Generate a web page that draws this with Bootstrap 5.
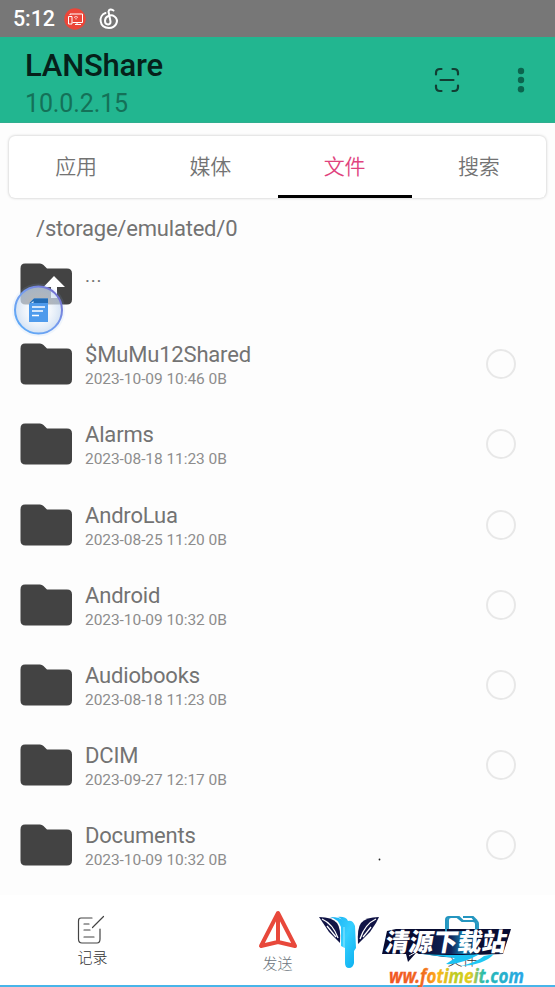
<!DOCTYPE html>
<html lang="zh-CN">
<head>
<meta charset="utf-8">
<meta name="viewport" content="width=device-width, initial-scale=1">
<title>LANShare</title>
<link href="https://cdn.jsdelivr.net/npm/bootstrap@5.3.0/dist/css/bootstrap.min.css" rel="stylesheet">
<style>
body{font-family:Roboto,"Noto Sans CJK SC",sans-serif;background:#fdfdfd;color:#737373;height:987px;overflow:hidden}
.status{height:37px;background:#777;color:#fff;padding-left:13px}
.clock{font-size:21.5px;font-weight:500;line-height:38px;width:50px;letter-spacing:-.1px}
.topbar{height:86px;background:#22b690;padding:0 27px 0 25px;border-bottom:1px solid #2fae8f}
.app-title{font-size:31px;font-weight:500;line-height:36px;color:#06211a;padding-top:11px;margin:0;letter-spacing:-.2px}
.ip{font-size:25px;line-height:30px;color:#147158;padding-top:5px;letter-spacing:-.12px}
.scan{margin-right:54px}
.tabs{height:62px;margin:13px 9px 0;background:#fff;border-radius:6px;box-shadow:0 0 3px rgba(0,0,0,.25)}
.tabs a{font-size:21px;font-weight:350;color:#737373;line-height:63px;height:62px;text-decoration:none}
.tabs a.current{color:#e0437e;box-shadow:inset 0 -3px #000}
.path{font-size:22px;line-height:30px;padding:16px 0 0 36px;height:46px;letter-spacing:-.2px}
.entry{height:80.2px;padding:0 39px 0 20px}
.entry .folder{width:52px;height:42px;margin-right:13px;flex:none}
.entry-text{padding-top:3px}
.entry-name{font-size:22px;line-height:26px;letter-spacing:-.18px}
.entry-info{font-size:15.5px;line-height:20px;color:#8d8d8d;padding-top:1px;letter-spacing:-.06px}
.up-text{font-size:19px;letter-spacing:.7px;padding-bottom:15px}
.pick{width:30px;height:30px;border:2px solid #e8e8e8;border-radius:50%}
.floating{left:9px;top:281px;width:58px;height:58px}
.bottombar{height:92px;top:895px;background:#fff;border-bottom:2px solid #48b5e9}
.nav-cell{flex:1 1 0}
.nav-cell svg{margin-top:20px}
.nav-cell .plane{margin-top:15px}
.nav-cell .note{margin-right:2px}
.tab-text{font-size:15px;font-weight:300;line-height:20px;color:#333}
.speck{left:378px;top:858px}
.brand{left:310px;top:900px;width:245px;height:87px}
</style>
<script src="https://cdn.jsdelivr.net/npm/bootstrap@5.3.0/dist/js/bootstrap.bundle.min.js"></script>
</head>
<body class="position-relative">
<svg width="0" height="0" class="position-absolute"><symbol id="folder" viewBox="0 0 52 42"><path fill="#434343" d="M5 .5H20Q22 .5 23.500 2L27 5.500H47Q52 5.500 52 10.500V36.500Q52 41.500 47 41.500H5.500Q.5 41.500 .5 36.500V5.500Q.5 .5 5 .5Z"/></symbol></svg>
<header>
 <div class="status d-flex align-items-center">
  <span class="clock">5:12</span>
  <svg width="24" height="24" viewBox="0 0 24 24"><circle cx="12" cy="12" r="10.700" fill="#eb4639"/><g fill="none" stroke="#fff" stroke-width="1"><path d="M7 8V7H19.500V15.500H9.500M5.500 9.500H9V17H5.500ZM12 17.500H18M14 15.500V17.500"/><path d="M11 10.500Q13 8.500 15 10.500M13 11V12.500" stroke-width=".8"/></g></svg>
  <svg class="ms-2" width="28" height="26" viewBox="0 0 28 26"><path fill="none" stroke="#fff" stroke-width="2" stroke-linecap="round" d="M18.500 4.500Q14.500 2 13.500 5.500L15.500 15.500C16 19.500 10 19.500 10 15C10 10 16 8 19.500 10.500C24.500 14.500 21 22 14 22C4 22 3 9.500 10.500 7"/></svg>
 </div>
 <div class="topbar d-flex justify-content-between">
  <div><h1 class="app-title">LANShare</h1><div class="ip">10.0.2.15</div></div>
  <div class="d-flex align-items-center">
   <svg class="scan" width="26" height="26" viewBox="0 0 26 26" fill="none" stroke="#123e33" stroke-width="2.200" stroke-linecap="round"><path d="M2 7.500V6Q2 2 6 2H7.500M18.500 2H20Q24 2 24 6V7.500M24 18.500V20Q24 24 20 24H18.500M7.500 24H6Q2 24 2 20V18.500M6.500 13H19.500"/></svg>
   <svg width="14" height="26" viewBox="0 0 14 26" fill="#0b654e"><circle cx="7" cy="4" r="3.200"/><circle cx="7" cy="13" r="3.200"/><circle cx="7" cy="22.200" r="3.200"/></svg>
  </div>
 </div>
</header>
<main>
 <nav class="tabs d-flex text-center"><a class="flex-fill w-25" href="#">应用</a><a class="flex-fill w-25" href="#">媒体</a><a class="flex-fill w-25 current" href="#">文件</a><a class="flex-fill w-25" href="#">搜索</a></nav>
 <div class="path">/storage/emulated/0</div>
 <div class="entry d-flex align-items-center"><svg class="folder" viewBox="0 0 52 42"><use href="#folder"/><path fill="#fff" d="M34 13L45 24H37V35H31V24H23.500Z"/></svg><div class="up-text">...</div></div>
 <div class="entry d-flex align-items-center"><svg class="folder"><use href="#folder"/></svg><div class="entry-text"><div class="entry-name">$MuMu12Shared</div><div class="entry-info">2023-10-09 10:46 0B</div></div><span class="pick ms-auto"></span></div>
 <div class="entry d-flex align-items-center"><svg class="folder"><use href="#folder"/></svg><div class="entry-text"><div class="entry-name">Alarms</div><div class="entry-info">2023-08-18 11:23 0B</div></div><span class="pick ms-auto"></span></div>
 <div class="entry d-flex align-items-center"><svg class="folder"><use href="#folder"/></svg><div class="entry-text"><div class="entry-name">AndroLua</div><div class="entry-info">2023-08-25 11:20 0B</div></div><span class="pick ms-auto"></span></div>
 <div class="entry d-flex align-items-center"><svg class="folder"><use href="#folder"/></svg><div class="entry-text"><div class="entry-name">Android</div><div class="entry-info">2023-10-09 10:32 0B</div></div><span class="pick ms-auto"></span></div>
 <div class="entry d-flex align-items-center"><svg class="folder"><use href="#folder"/></svg><div class="entry-text"><div class="entry-name">Audiobooks</div><div class="entry-info">2023-08-18 11:23 0B</div></div><span class="pick ms-auto"></span></div>
 <div class="entry d-flex align-items-center"><svg class="folder"><use href="#folder"/></svg><div class="entry-text"><div class="entry-name">DCIM</div><div class="entry-info">2023-09-27 12:17 0B</div></div><span class="pick ms-auto"></span></div>
 <div class="entry d-flex align-items-center"><svg class="folder"><use href="#folder"/></svg><div class="entry-text"><div class="entry-name">Documents</div><div class="entry-info">2023-10-09 10:32 0B</div></div><span class="pick ms-auto"></span></div>
</main>

<svg class="floating position-absolute" viewBox="0 0 58 58">
 <defs><linearGradient id="ring" x1="0" y1="1" x2="1" y2="0"><stop stop-color="#58adfa"/><stop offset=".55" stop-color="#779bed"/><stop offset="1" stop-color="#7363c7"/></linearGradient><radialGradient id="glass"><stop offset=".5" stop-color="#eef4fb" stop-opacity=".65"/><stop offset="1" stop-color="#c5d9f1" stop-opacity=".75"/></radialGradient></defs>
 <circle cx="29.500" cy="29" r="25" fill="none" stroke="#8fbef5" stroke-opacity=".12" stroke-width="3"/><circle cx="29.500" cy="29" r="23.500" fill="url(#glass)" stroke="url(#ring)" stroke-width="2"/>
 <path fill="#4f9bec" d="M25 17.500H39V41H20V23Z"/><path fill="#226cb6" d="M25 17.500H39V22H20.500Z"/><path stroke="#fff" stroke-width="1.700" d="M23 26H36M23 30H34M23 34.500H30"/><path fill="#d5eaff" d="M22 22L24.500 20V22Z"/>
</svg>
<svg class="speck position-absolute" width="3" height="3"><circle cx="1.500" cy="1.500" r=".9" fill="#222"/></svg>

<footer class="bottombar position-absolute start-0 w-100 d-flex text-center">
 <div class="nav-cell"><svg class="note" width="30" height="31" viewBox="0 0 30 31" fill="none" stroke="#444" stroke-width="1.200" stroke-linecap="round"><path d="M15 3H4Q1.500 3 1.500 6V24Q1.500 28 5 28H20Q23 28 23 24V14M15.500 12.500L26.500 1.500M7 9H12M7 15H13M7 22H17"/></svg><div class="tab-text" style="margin-top:2px">记录</div></div>
 <div class="nav-cell"><svg class="plane d-block mx-auto" width="40" height="40" viewBox="0 0 40 40" fill="none" stroke="#e8483b" stroke-width="4" stroke-linejoin="round"><path d="M20 3L3 36L20 32L37 36ZM20 3V32"/></svg><div class="tab-text pt-1 text-secondary">发送</div></div>
 <div class="nav-cell"><svg class="d-block mx-auto" width="34" height="31" viewBox="0 0 34 31" fill="none" stroke="#299ac3" stroke-width="2"><path d="M2 29V5Q2 2 5 2H13L17 6H29Q32 6 32 9V29ZM17 2H27L31 6"/></svg><div class="tab-text pt-1">文件</div></div>
</footer>

<svg class="brand position-absolute" viewBox="0 0 245 87">
 <defs>
  <linearGradient id="water" x2="1" y2="1"><stop stop-color="#18aef0"/><stop offset=".5" stop-color="#35cfff"/><stop offset="1" stop-color="#0aafef"/></linearGradient>
  <linearGradient id="plate" x1="0" x2="1"><stop stop-color="#080c32"/><stop offset=".55" stop-color="#10255b"/><stop offset=".75" stop-color="#147fae"/><stop offset="1" stop-color="#080c32"/></linearGradient>
  <linearGradient id="rainbow" gradientUnits="userSpaceOnUse" x1="79" y1="0" x2="214" y2="0"><stop stop-color="#f15324"/><stop offset=".25" stop-color="#f06a20"/><stop offset=".36" stop-color="#ffb31a"/><stop offset=".5" stop-color="#b8cd25"/><stop offset=".6" stop-color="#eacb1c"/><stop offset=".7" stop-color="#26bbb0"/><stop offset="1" stop-color="#29a5e8"/></linearGradient>
 </defs>
 <g fill="#101345"><path d="M9 17Q22 17 27 23Q31 28 30 43L19 32L13 23Z"/><path d="M69 17Q56 17 51 23Q47 28 48 44L60 32L66 23Z"/></g>
 <path fill="none" stroke="#fff" stroke-width="1.300" d="M12 19Q23 24 28 38M17 26L26 37M66 19Q55 24 50 39M61 27L53 37"/>
 <path fill="url(#water)" d="M20 17Q31 17 33 21Q30 17 27 17Q36 16 38 21Q43 20 45 26L46 48L44 51V63Q43 68 39 68Q35 68 35 63V48L31 46V27Q28 19 20 17Z"/>
 <path fill="none" stroke="#b5efff" stroke-width=".8" d="M34 27V48"/>
 <path fill="#080c32" d="M77 31L86 29H201L193 54L163 55L160 58L134 57L106 53L98 62L96 54H72Z"/>
 <path fill="url(#plate)" d="M120 31H168L164 54H108Z"/>
 <path fill="#1cc2f2" d="M111 54Q150 56 170 54L160 59Q145 65 136 64L145 58Z"/>
 <path fill="#20c8f3" d="M184 54Q174 65 151 66Q167 62 174 56Z"/>
 <path fill="none" stroke="#2495bf" stroke-width="2" d="M136 43V20Q136 17 139 17H147L152 21H163Q166 21 166 24V43M153 17H162L165 21"/>
 <text x="74" y="51.500" textLength="121" lengthAdjust="spacingAndGlyphs" transform="translate(9 0) skewX(-10)" font-family="Noto Sans CJK SC, sans-serif" font-size="25" font-weight="900" fill="#fff">清源下载站</text>
 <path fill="none" stroke="#fff" stroke-width="1" d="M99 56L106 52"/>
 <text x="79" y="83" textLength="135" lengthAdjust="spacingAndGlyphs" font-family="Noto Sans, Open Sans, sans-serif" font-size="19" font-weight="700" font-style="italic" fill="url(#rainbow)" stroke="url(#rainbow)" stroke-width=".3">ww.fotimeit.com</text>
</svg>
</body>
</html>
